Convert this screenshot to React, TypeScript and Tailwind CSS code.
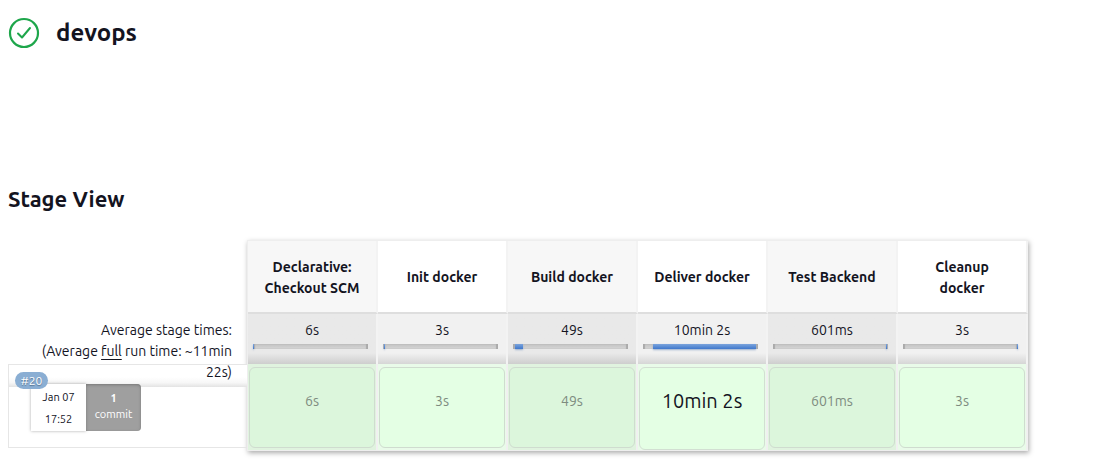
type Stage = {
  name: string;
  average: string;
  duration: string;
  before: number;
  share: number;
  longest?: boolean;
};

const stages: Stage[] = [
  { name: "Declarative: Checkout SCM", average: "6s", duration: "6s", before: 0, share: 1 },
  { name: "Init docker", average: "3s", duration: "3s", before: 1, share: 1 },
  { name: "Build docker", average: "49s", duration: "49s", before: 2, share: 7 },
  { name: "Deliver docker", average: "10min 2s", duration: "10min 2s", before: 9, share: 89, longest: true },
  { name: "Test Backend", average: "601ms", duration: "601ms", before: 98, share: 1 },
  { name: "Cleanup docker", average: "3s", duration: "3s", before: 99, share: 1 },
];

function SuccessIcon() {
  return (
    <svg className="size-8" viewBox="0 0 32 32" fill="none" stroke="#1ea64b" role="img" aria-label="Success">
      <circle cx="16" cy="16" r="14" strokeWidth="2.2" />
      <path d="M10 16.5 14 20.5l8-9.5" strokeWidth="2" strokeLinecap="round" strokeLinejoin="round" />
    </svg>
  );
}

function StageBar({ before, share }: { before: number; share: number }) {
  return (
    <div className="mt-[3px] mr-2 ml-[5px] flex h-[5px] bg-linear-to-b from-[#c2c2c2] to-[#d6d6d6] shadow-[inset_2px_0_1px_#aaa,inset_-2px_0_1px_#aaa]">
      <div style={{ width: `${before}%` }} />
      <div
        className="bg-linear-to-b from-[#7ba4dc] to-[#4078cc] shadow-[0_1px_2px_#9ab0cf]"
        style={{ width: `${share}%` }}
      />
    </div>
  );
}

function BuildRow() {
  return (
    <div className="relative h-[84px] border-y border-l border-[#e6e6e6]">
      <div className="h-[22px] bg-linear-to-b from-white from-55% via-[#f7f7f7] via-80% to-[#e3e3e3]" />
      <a
        href="#20"
        className="absolute top-[7px] left-1.5 z-10 flex h-[17px] w-[33px] items-center justify-center rounded-full bg-[#8aaed3] text-xs text-white [text-shadow:0_1px_1px_#52708f]"
      >
        #20
      </a>
      <div className="absolute top-[19px] left-[22px] flex h-[47px] text-center text-[11px]">
        <div className="w-[55px] bg-white pt-0.5 leading-[22px] shadow-[0_0_3px_#aaa]">
          <div>Jan 07</div>
          <div>17:52</div>
        </div>
        <div className="w-[55px] rounded-r bg-[#9f9f9f] pt-1.5 leading-4 text-white shadow-[inset_0_1px_3px_#777]">
          <div className="font-bold">1</div>
          <div>commit</div>
        </div>
      </div>
    </div>
  );
}

export default function App() {
  return (
    <main className="px-2 pb-4 font-['Ubuntu','Noto_Sans',sans-serif] text-sm text-[#14141f]">
      <h1 className="flex h-[66px] items-center gap-4 text-2xl font-bold">
        <SuccessIcon />
        devops
      </h1>
      <section className="pt-[117px]">
        <h2 className="text-[22px] leading-8 font-bold">Stage View</h2>
        <div className="mt-[25px] flex items-start">
          <div className="w-[239px] shrink-0 pt-20">
            <p className="relative z-10 h-11 pr-[15px] pl-6 text-right leading-[21px]">
              Average stage times:
              <br />
              (Average <span className="underline underline-offset-3">full</span> run time: ~11min 22s)
            </p>
            <BuildRow />
          </div>
          <table className="w-[781px] shrink-0 table-fixed border-separate border-spacing-0 border border-r-0 border-[#eeeeee] text-center shadow-[1px_2px_5px_#aaa]">
            <thead>
              <tr className="h-[73px]">
                {stages.map((stage) => (
                  <th
                    key={stage.name}
                    scope="col"
                    className="border-r-2 border-b-2 border-r-[#f3f3f3] border-b-[#dedede] bg-white px-3.5 pt-0.5 leading-[21px] font-bold odd:bg-[#f7f7f7]"
                  >
                    {stage.name}
                  </th>
                ))}
              </tr>
            </thead>
            <tbody>
              <tr className="h-[50px]">
                {stages.map((stage) => (
                  <td
                    key={stage.name}
                    className="border-r-2 border-[#f3f3f3] bg-linear-to-b from-[#f1f1f1] from-78% to-[#d6d6d6] pt-1.5 align-top leading-[21px] odd:from-[#e9e9e9] odd:to-[#cecece]"
                  >
                    {stage.average}
                    <StageBar before={stage.before} share={stage.share} />
                  </td>
                ))}
              </tr>
              <tr className="h-[86px]">
                {stages.map((stage) => (
                  <td
                    key={stage.name}
                    className="group border-r-2 border-[#f0f0f0] bg-[#e9fbe9] px-px pt-[3px] align-top odd:bg-[#e0f3df]"
                  >
                    <div
                      className={
                        stage.longest
                          ? "h-[83px] rounded-md border border-[#d2dfd2] bg-[#e4ffe4] pt-[19px] text-xl leading-7"
                          : "h-[81px] rounded-md border border-[#cfdccf] bg-[#e4ffe4] pt-[19px] leading-7 text-[#7e8c80] group-odd:bg-[#dcf6dc]"
                      }
                    >
                      {stage.duration}
                    </div>
                  </td>
                ))}
              </tr>
            </tbody>
          </table>
        </div>
      </section>
    </main>
  );
}
